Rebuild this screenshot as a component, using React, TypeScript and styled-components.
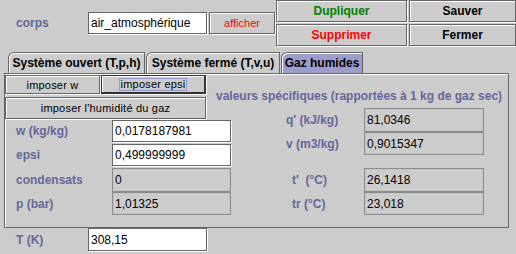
import styled, { createGlobalStyle, css } from "styled-components";

const GlobalStyle = createGlobalStyle`
  html, body {
    margin: 0;
    padding: 0;
  }
  body {
    background-color: #cccccc;
    background-image: repeating-conic-gradient(#c9c9c9 0 25%, #cfcfcf 0 50%);
    background-size: 2px 2px;
    font-family: "Liberation Sans", Arial, sans-serif;
  }
`;

const Page = styled.div`
  width: 516px;
  height: 254px;
  overflow: hidden;
`;

const TopBar = styled.div`
  display: flex;
  align-items: center;
  height: 46px;
`;

const Label = styled.span<{ $width?: number; $indent?: number }>`
  box-sizing: border-box;
  flex: none;
  width: ${(p) => p.$width ?? 88}px;
  padding-left: ${(p) => p.$indent ?? 16}px;
  font-size: 12px;
  font-weight: bold;
  color: #666699;
  white-space: nowrap;
`;

const fieldBase = css`
  box-sizing: border-box;
  display: flex;
  align-items: center;
  flex: none;
  width: 119px;
  padding-left: 2px;
  font-size: 12px;
  color: #000;
  white-space: nowrap;
`;

const TextField = styled.div<{ $height?: number }>`
  ${fieldBase}
  height: ${(p) => p.$height ?? 22}px;
  background: #fff;
  border: 1px solid #666;
  box-shadow: 1px 1px 0 #fff;
`;

const ReadField = styled.div<{ $height?: number; $width?: number }>`
  ${fieldBase}
  width: ${(p) => p.$width ?? 119}px;
  height: ${(p) => p.$height ?? 24}px;
  border: 1px solid #8c8c8c;
  box-shadow: inset 0 0 0 1px #c4c4c4;
`;

const Button = styled.button<{ $color?: string; $bold?: boolean; $default?: boolean }>`
  box-sizing: border-box;
  display: flex;
  align-items: center;
  justify-content: center;
  margin: 0;
  padding: 0;
  background: transparent;
  font-family: inherit;
  font-size: ${(p) => (p.$bold ? 12 : 11)}px;
  font-weight: ${(p) => (p.$bold ? "bold" : "normal")};
  color: ${(p) => p.$color ?? "#000"};
  border: 1px solid #666;
  box-shadow: inset 1px 1px 0 #fff, 1px 1px 0 #fff;
  white-space: nowrap;
  ${(p) =>
    p.$default &&
    css`
      border-right-width: 2px;
      border-bottom-width: 2px;
      border-color: #333;
    `}
`;

const AfficherButton = styled(Button)`
  width: 70px;
  height: 22px;
  margin-left: 2px;
`;

const ActionGrid = styled.div`
  align-self: stretch;
  flex: none;
  margin-left: 1px;
  width: 240px;
  display: grid;
  grid-template-columns: 131px 1fr;
  grid-template-rows: 22px 22px;
  gap: 2px;
`;

const Tabs = styled.div`
  display: flex;
  gap: 1px;
  margin-top: 6px;
  padding-left: 8px;
  height: 21px;
`;

const Tab = styled.div<{ $width: number; $selected?: boolean }>`
  box-sizing: border-box;
  width: ${(p) => p.$width}px;
  height: 21px;
  display: flex;
  align-items: center;
  justify-content: center;
  font-size: 12px;
  font-weight: bold;
  color: #000;
  background: ${(p) => (p.$selected ? "#9d9dcc" : "transparent")};
  border: 1px solid #666;
  border-bottom: none;
  border-top-left-radius: 6px;
  box-shadow: inset 1px 1px 0 #fff;
  white-space: nowrap;
`;

const Panel = styled.div`
  box-sizing: border-box;
  display: flex;
  margin-left: 4px;
  width: 505px;
  height: 155px;
  border: 1px solid #666;
  box-shadow: inset 1px 1px 0 #fff;
`;

const LeftCol = styled.div`
  width: 202px;
  flex: none;
`;

const ButtonRow = styled.div`
  display: flex;
  margin-top: 1px;
  gap: 1px;
`;

const ImposeButton = styled(Button)<{ $w: number; $h: number }>`
  width: ${(p) => p.$w}px;
  height: ${(p) => p.$h}px;
  letter-spacing: 0.2px;
`;

const FocusText = styled.span`
  border: 1px solid #9999cc;
  padding: 0 1px;
  line-height: 11px;
`;

const Row = styled.div<{ $top?: number }>`
  display: flex;
  align-items: center;
  margin-top: ${(p) => p.$top ?? 0}px;
`;

const RightCol = styled.div`
  flex: 1;
  padding-left: 9px;
`;

const Heading = styled.div`
  margin-top: 15px;
  height: 14px;
  line-height: 14px;
  font-size: 12px;
  font-weight: bold;
  color: #666699;
  white-space: nowrap;
`;

const BottomRow = styled.div`
  display: flex;
  align-items: center;
  height: 23px;
`;

const App = () => {
  return (
    <Page>
      <GlobalStyle />
      <TopBar>
        <Label>corps</Label>
        <TextField>air_atmosphérique</TextField>
        <AfficherButton $color="#ff0000">afficher</AfficherButton>
        <ActionGrid>
          <Button $bold $color="#008000">Dupliquer</Button>
          <Button $bold>Sauver</Button>
          <Button $bold $color="#ff0000">Supprimer</Button>
          <Button $bold>Fermer</Button>
        </ActionGrid>
      </TopBar>

      <Tabs>
        <Tab $width={137}>Système ouvert (T,p,h)</Tab>
        <Tab $width={134}>Système fermé (T,v,u)</Tab>
        <Tab $width={82} $selected>Gaz humides</Tab>
      </Tabs>

      <Panel>
        <LeftCol>
          <ButtonRow>
            <ImposeButton $w={95} $h={19}>imposer w</ImposeButton>
            <ImposeButton $w={105} $h={19} $default>
              <FocusText>imposer epsi</FocusText>
            </ImposeButton>
          </ButtonRow>
          <Row $top={3}>
            <ImposeButton $w={201} $h={22}>imposer l'humidité du gaz</ImposeButton>
          </Row>
          <Row $top={1}>
            <Label $width={107} $indent={11}>w (kg/kg)</Label>
            <TextField>0,0178187981</TextField>
          </Row>
          <Row $top={2}>
            <Label $width={107} $indent={11}>epsi</Label>
            <TextField>0,499999999</TextField>
          </Row>
          <Row $top={2}>
            <Label $width={107} $indent={11}>condensats</Label>
            <ReadField>0</ReadField>
          </Row>
          <Row>
            <Label $width={107} $indent={11}>p (bar)</Label>
            <ReadField $height={23}>1,01325</ReadField>
          </Row>
        </LeftCol>

        <RightCol>
          <Heading>valeurs spécifiques (rapportées à 1 kg de gaz sec)</Heading>
          <Row $top={5}>
            <Label $width={148} $indent={70}>q' (kJ/kg)</Label>
            <ReadField $width={120}>81,0346</ReadField>
          </Row>
          <Row>
            <Label $width={148} $indent={70}>v (m3/kg)</Label>
            <ReadField $width={120} $height={23}>0,9015347</ReadField>
          </Row>
          <Row $top={13}>
            <Label $width={148} $indent={76}>t'&nbsp; (°C)</Label>
            <ReadField $width={120}>26,1418</ReadField>
          </Row>
          <Row>
            <Label $width={148} $indent={76}>tr (°C)</Label>
            <ReadField $width={120} $height={23}>23,018</ReadField>
          </Row>
        </RightCol>
      </Panel>

      <BottomRow>
        <Label>T (K)</Label>
        <TextField $height={23}>308,15</TextField>
      </BottomRow>
    </Page>
  );
};

export default App;
